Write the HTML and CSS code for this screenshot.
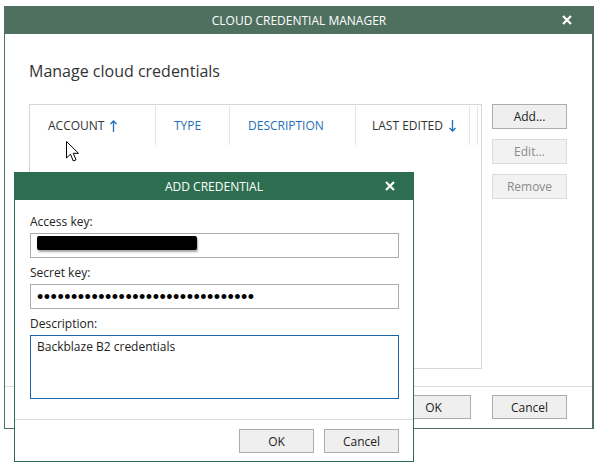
FILE: index.html
```html
<!DOCTYPE html>
<html lang="en">

<head>
    <meta charset="UTF-8">
    <meta name="viewport" content="width=device-width, initial-scale=1.0">
    <title>Cloud Credential Manager</title>
    <link rel="stylesheet" href="styles.css">
</head>

<body>
    <div class="desktop">
        <!-- Ventana principal -->
        <div class="window manager">
            <div class="title-bar title-inactive">
                <span>CLOUD CREDENTIAL MANAGER</span>
                <svg class="close" width="10" height="10" viewBox="0 0 10 10">
                    <path d="M1 1 L9 9 M9 1 L1 9" stroke="#fff" stroke-width="2.2" />
                </svg>
            </div>
            <div class="window-body manager-body">
                <h1 class="heading">Manage cloud credentials</h1>
                <div class="list-row">
                    <div class="grid-box">
                        <div class="grid-header">
                            <div class="col col-account">ACCOUNT
                                <svg class="sort" width="7" height="12" viewBox="0 0 7 12">
                                    <path d="M3.5 1 V12 M0.5 4 L3.5 1 L6.5 4" stroke="#1e6fb8" stroke-width="1.3" fill="none" />
                                </svg>
                            </div>
                            <div class="col col-type link">TYPE</div>
                            <div class="col col-desc link">DESCRIPTION</div>
                            <div class="col col-edited">LAST EDITED
                                <svg class="sort" width="7" height="12" viewBox="0 0 7 12">
                                    <path d="M3.5 0 V11 M0.5 8 L3.5 11 L6.5 8" stroke="#1e6fb8" stroke-width="1.3" fill="none" />
                                </svg>
                            </div>
                            <div class="col col-filler"></div>
                        </div>
                    </div>
                    <div class="side-buttons">
                        <button class="btn">Add...</button>
                        <button class="btn" disabled>Edit...</button>
                        <button class="btn" disabled>Remove</button>
                    </div>
                </div>
            </div>
            <div class="window-footer manager-footer">
                <button class="btn">OK</button>
                <button class="btn">Cancel</button>
            </div>
        </div>

        <!-- Puntero -->
        <svg class="cursor" width="14" height="22" viewBox="0 0 14 22">
            <path d="M0.5 0.5 L0.5 17 L4.5 13.2 L7.3 20 L10 18.8 L7.3 12.3 L12.5 12.3 Z" fill="#fff" stroke="#000" stroke-width="1" stroke-linejoin="miter" />
        </svg>

        <!-- Dialogo -->
        <div class="window dialog">
            <div class="title-bar title-active">
                <span>ADD CREDENTIAL</span>
                <svg class="close" width="10" height="10" viewBox="0 0 10 10">
                    <path d="M1 1 L9 9 M9 1 L1 9" stroke="#fff" stroke-width="2.2" />
                </svg>
            </div>
            <div class="window-body dialog-body">
                <label class="field-label">Access key:</label>
                <div class="field field-access">
                    <span class="redacted"></span>
                </div>

                <label class="field-label">Secret key:</label>
                <div class="field field-secret">
                    <span class="dots">••••••••••••••••••••••••••••••••</span>
                </div>

                <label class="field-label">Description:</label>
                <div class="field field-text">Backblaze B2 credentials</div>
            </div>
            <div class="window-footer dialog-footer">
                <button class="btn">OK</button>
                <button class="btn">Cancel</button>
            </div>
        </div>
    </div>
</body>

</html>
```

FILE: styles.css
```css
/* General */
body {
    margin: 0;
    padding: 0;
    background: #fff;
    color: #222;
    font-family: 'Open Sans', 'Noto Sans', sans-serif;
}

.desktop {
    position: relative;
    width: 598px;
    height: 469px;
    overflow: hidden;
}

/* Ventanas */
.window {
    position: absolute;
    box-sizing: border-box;
    display: flex;
    flex-direction: column;
    background: #fff;
}

.manager {
    left: 4px;
    top: 6px;
    width: 590px;
    height: 423px;
    border: 1px solid #4f705f;
    border-right-width: 2px;
    border-top: none;
}

.dialog {
    left: 14px;
    top: 172px;
    width: 400px;
    height: 290px;
    border: 1px solid #2d6e50;
    border-top: none;
}

.title-bar {
    position: relative;
    flex: none;
    height: 28px;
    display: flex;
    align-items: center;
    justify-content: center;
    color: #fff;
    font-size: 12px;
    margin: 0 -1px;
}

.manager .title-bar {
    margin-right: -2px;
}

.title-inactive {
    background: #4f705f;
}

.title-active {
    background: #2d6e50;
}

.title-bar .close {
    position: absolute;
    top: 9px;
}

.manager .close {
    right: 22px;
}

.dialog .close {
    right: 19px;
}

.window-body {
    flex: 1;
}

.window-footer {
    flex: none;
    display: flex;
    justify-content: flex-end;
    border-top: 1px solid #dcdcdc;
}

/* Botones */
.btn {
    box-sizing: border-box;
    width: 75px;
    height: 24px;
    padding: 0;
    font-family: inherit;
    font-size: 12px;
    color: #222;
    background: #efefef;
    border: 1px solid #acacac;
}

.btn:disabled {
    color: #8c8c8c;
    background: #f2f2f2;
    border-color: #dcdcdc;
}

/* Administrador */
.manager-body {
    padding: 27px 25px 0 24px;
}

.heading {
    margin: 0 0 23px;
    font-size: 16px;
    line-height: 20px;
    font-weight: normal;
    color: #333;
}

.list-row {
    display: flex;
    gap: 10px;
}

.grid-box {
    flex: 1;
    height: 265px;
    box-sizing: border-box;
    border: 1px solid #d6d6d6;
}

.grid-header {
    display: flex;
    height: 39px;
    margin-top: 1px;
}

.col {
    box-sizing: border-box;
    display: flex;
    align-items: center;
    gap: 6px;
    padding-left: 18px;
    border-right: 1px solid #e4e4e4;
    font-size: 12px;
    color: #333;
}

.col.link {
    color: #1e6fb8;
}

.col-account {
    width: 126px;
}

.col-type {
    width: 74px;
}

.col-desc {
    width: 126px;
}

.col-edited {
    width: 114px;
    padding-left: 16px;
}

.col-filler {
    width: 8px;
    padding: 0;
}

.side-buttons {
    display: flex;
    flex-direction: column;
    gap: 10px;
}

.side-buttons .btn {
    height: 25px;
}

.manager-footer {
    padding: 8px 25px 9px;
    gap: 21px;
}

/* Dialogo */
.dialog-body {
    padding: 14px 14px 0 15px;
}

.field-label {
    display: block;
    font-size: 12px;
    line-height: 15px;
    margin-bottom: 4px;
    color: #222;
}

.field + .field-label {
    margin-top: 7px;
}

.field {
    box-sizing: border-box;
    height: 25px;
    border: 1px solid #acacac;
    display: flex;
    align-items: center;
    padding: 0 6px;
}

.field-access {
    align-items: flex-start;
    padding-top: 2px;
}

.redacted {
    display: block;
    width: 160px;
    height: 14px;
    background: #000;
    border-radius: 2px;
    box-shadow: 1px 2px 2px rgba(0, 0, 0, 0.35);
}

.dots {
    font-family: 'Liberation Sans', sans-serif;
    font-size: 18px;
    line-height: 18px;
    letter-spacing: 0.5px;
    color: #000;
}

.field-text {
    height: 64px;
    align-items: flex-start;
    padding: 3px 6px;
    border-color: #1c64a8;
    font-size: 12px;
    line-height: 15px;
}

.dialog-footer {
    padding: 9px 14px 8px;
    gap: 10px;
}

/* Puntero */
.cursor {
    position: absolute;
    left: 66px;
    top: 141px;
}
```
